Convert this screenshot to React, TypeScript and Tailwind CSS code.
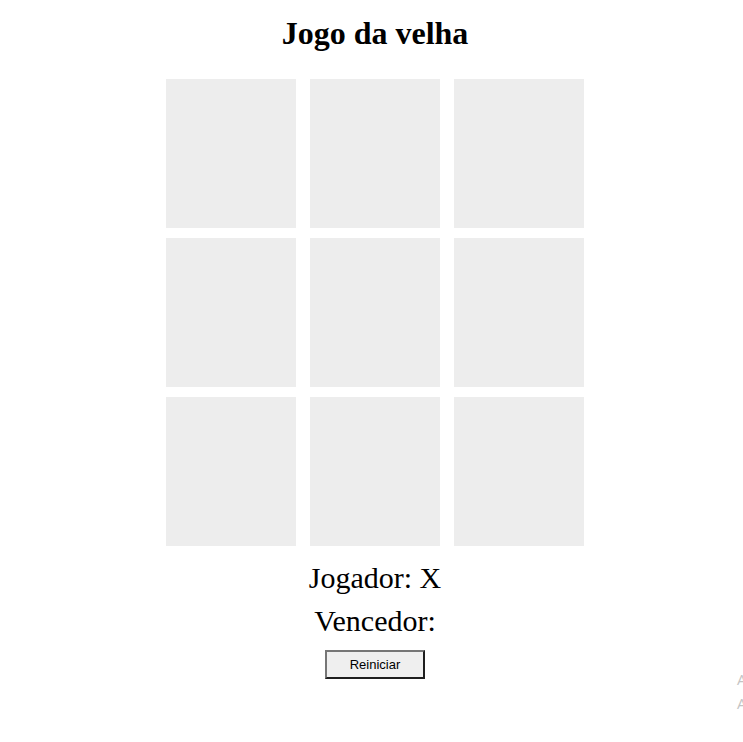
const cells = Array.from({ length: 9 }, (_, i) => i);

export default function App() {
  return (
    <div className="relative w-full h-[742px] overflow-hidden bg-white font-['Liberation_Serif',serif] text-black">
      <div className="flex flex-col items-center pl-[7px]">
        <h1 className="mt-[15px] text-[32px] leading-[36px] font-bold">Jogo da velha</h1>

        {/* tabuleiro */}
        <div className="mt-[28px] grid grid-cols-[130px_130px_130px] auto-rows-[149px] gap-x-[14px] gap-y-[10px]">
          {cells.map((i) => (
            <div key={i} className="bg-[#ededed]" />
          ))}
        </div>

        <p className="mt-[15px] text-[30px] leading-[34px]">Jogador: X</p>
        <p className="mt-[9px] text-[30px] leading-[34px]">Vencedor:</p>

        <button className="mt-[12px] w-[100px] h-[29px] bg-[#efefef] border-2 border-t-[#767676] border-l-[#767676] border-r-[#1e1e1e] border-b-[#1e1e1e] font-['Liberation_Sans',sans-serif] text-[13px] text-black">
          Reiniciar
        </button>
      </div>

      {/* marca d'água cortada na borda */}
      <div className="absolute left-[737px] top-[667px] whitespace-nowrap font-['Open_Sans',sans-serif] text-[15px] leading-[24px] text-[#c4c4c4]">
        <div>Ativar o Windows</div>
        <div>Acesse Configurações para ativar o Windows.</div>
      </div>
    </div>
  );
}
